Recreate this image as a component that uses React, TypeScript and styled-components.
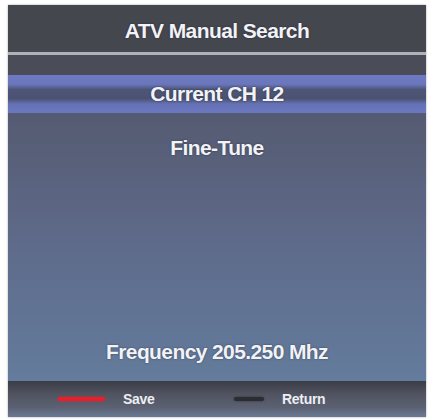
import { FC } from "react";
import styled, { createGlobalStyle } from "styled-components";

const GlobalStyle = createGlobalStyle`
    html, body {
        margin: 0;
        padding: 0;
        background: #ffffff;
    }

    body {
        font-family: "Liberation Sans", Arial, sans-serif;
    }
`;

const Page = styled.div`
    width: 434px;
    height: 420px;
    padding: 5px 8px 3px 8px;
    box-sizing: border-box;
`;

const Screen = styled.div`
    height: 100%;
    display: flex;
    flex-direction: column;
    background: linear-gradient(180deg, #4b4e5c 0%, #545a70 25%, #5e6988 55%, #6580a2 100%);
    box-shadow: 0 0 2px rgba(0, 0, 0, 0.35);
`;

const Header = styled.div`
    height: 50px;
    display: flex;
    align-items: center;
    justify-content: center;
    padding-top: 4px;
    box-sizing: border-box;
    background: #45474f;
    border-bottom: 3px solid #aeb1ba;
`;

const Label = styled.span`
    color: #f2f3f6;
    font-weight: 700;
    font-size: 21px;
    letter-spacing: -0.6px;
    text-shadow: 0 0 2px rgba(20, 20, 40, 0.6);
    white-space: nowrap;
`;

const Spacer = styled.div`
    height: 20px;
    background: #4a4c58;
`;

const Highlight = styled.div`
    height: 38px;
    display: flex;
    align-items: center;
    justify-content: center;
    background: linear-gradient(180deg,
        #6d7ac4 0%, #6a77bc 24%, #4e5678 38%, #4b5270 62%, #6571b4 76%, #6c79c2 100%);
`;

const Item = styled.div`
    height: 70px;
    display: flex;
    align-items: center;
    justify-content: center;
`;

const Filler = styled.div`
    flex: 1;
`;

const Frequency = styled.div`
    height: 50px;
    display: flex;
    align-items: center;
    justify-content: center;
    padding-bottom: 4px;
`;

const Footer = styled.div`
    height: 36px;
    display: flex;
    align-items: center;
    padding-left: 50px;
    background: linear-gradient(180deg, #3a3c46 0%, #50535f 35%, #5c6274 75%, #6a7a94 100%);
`;

const Key = styled.div`
    display: flex;
    align-items: center;
    width: 176px;
    gap: 18px;
`;

const Swatch = styled.span<{ $color: string; $width: number }>`
    display: inline-block;
    width: ${(props) => props.$width}px;
    height: 4px;
    border-radius: 2px;
    background: ${(props) => props.$color};
    box-shadow: 0 0 2px ${(props) => props.$color};
`;

const KeyLabel = styled.span`
    color: #eceef4;
    font-weight: 700;
    font-size: 14px;
    letter-spacing: -0.3px;
`;

const App: FC = () => {
    return (
        <Page>
            <GlobalStyle />
            <Screen>
                <Header>
                    <Label>ATV Manual Search</Label>
                </Header>
                <Spacer />
                <Highlight>
                    <Label>Current CH 12</Label>
                </Highlight>
                <Item>
                    <Label>Fine-Tune</Label>
                </Item>
                <Filler />
                <Frequency>
                    <Label>Frequency 205.250 Mhz</Label>
                </Frequency>
                <Footer>
                    <Key>
                        <Swatch $color="#e8202c" $width={47} />
                        <KeyLabel>Save</KeyLabel>
                    </Key>
                    <Key>
                        <Swatch $color="#2c2d33" $width={30} />
                        <KeyLabel>Return</KeyLabel>
                    </Key>
                </Footer>
            </Screen>
        </Page>
    );
};

export default App;
